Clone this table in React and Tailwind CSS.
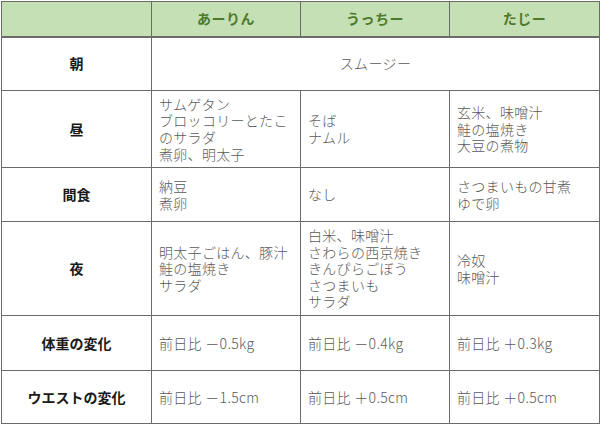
const rows = [
  { label: "朝", h: "h-[54px]", span: "スムージー" },
  {
    label: "昼",
    h: "h-[77px]",
    cells: [
      ["サムゲタン", "ブロッコリーとたこ", "のサラダ", "煮卵、明太子"],
      ["そば", "ナムル"],
      ["玄米、味噌汁", "鮭の塩焼き", "大豆の煮物"],
    ],
  },
  {
    label: "間食",
    h: "h-[54px]",
    cells: [["納豆", "煮卵"], ["なし"], ["さつまいもの甘煮", "ゆで卵"]],
  },
  {
    label: "夜",
    h: "h-[94px]",
    cells: [
      ["明太子ごはん、豚汁", "鮭の塩焼き", "サラダ"],
      ["白米、味噌汁", "さわらの西京焼き", "きんぴらごぼう", "さつまいも", "サラダ"],
      ["冷奴", "味噌汁"],
    ],
  },
  {
    label: "体重の変化",
    h: "h-[55px]",
    cells: [["前日比 －0.5kg"], ["前日比 －0.4kg"], ["前日比 ＋0.3kg"]],
  },
  {
    label: "ウエストの変化",
    h: "h-[53px]",
    cells: [["前日比 －1.5cm"], ["前日比 ＋0.5cm"], ["前日比 ＋0.5cm"]],
  },
];

const names = ["あーりん", "うっちー", "たじー"];

export default function App() {
  return (
    <div className="w-[600px] h-[427px] bg-white pt-px pl-px font-['Noto_Sans_CJK_JP','Noto_Sans',sans-serif]">
      <table className="w-[598px] table-fixed border-collapse">
        <colgroup>
          <col className="w-[150px]" />
          <col className="w-[149px]" />
          <col className="w-[149px]" />
          <col className="w-[150px]" />
        </colgroup>
        <thead>
          <tr className="h-[35px] bg-[#c5e0b4]">
            <th className="border border-[#6b6b6b] border-b-2"></th>
            {names.map((n) => (
              <th
                key={n}
                className="border border-[#6b6b6b] border-b-2 text-[14px] font-bold text-[#4f7a2c] text-center tracking-[0.5px]"
              >
                {n}
              </th>
            ))}
          </tr>
        </thead>
        <tbody>
          {rows.map((r) => (
            <tr key={r.label} className={r.h}>
              <td className="border border-[#6b6b6b] text-center text-[14px] font-bold text-[#1a1a1a]">
                {r.label}
              </td>
              {r.span ? (
                <td
                  colSpan={3}
                  className="border border-[#6b6b6b] text-center text-[14px] font-light text-[#595959] tracking-[0.4px]"
                >
                  {r.span}
                </td>
              ) : (
                r.cells.map((lines, i) => (
                  <td
                    key={i}
                    className="border border-[#6b6b6b] px-[7px] align-middle text-[14px] leading-[16.6px] font-light text-[#595959] tracking-[0.3px] whitespace-nowrap"
                  >
                    {lines.map((l) => (
                      <div key={l}>{l}</div>
                    ))}
                  </td>
                ))
              )}
            </tr>
          ))}
        </tbody>
      </table>
    </div>
  );
}
